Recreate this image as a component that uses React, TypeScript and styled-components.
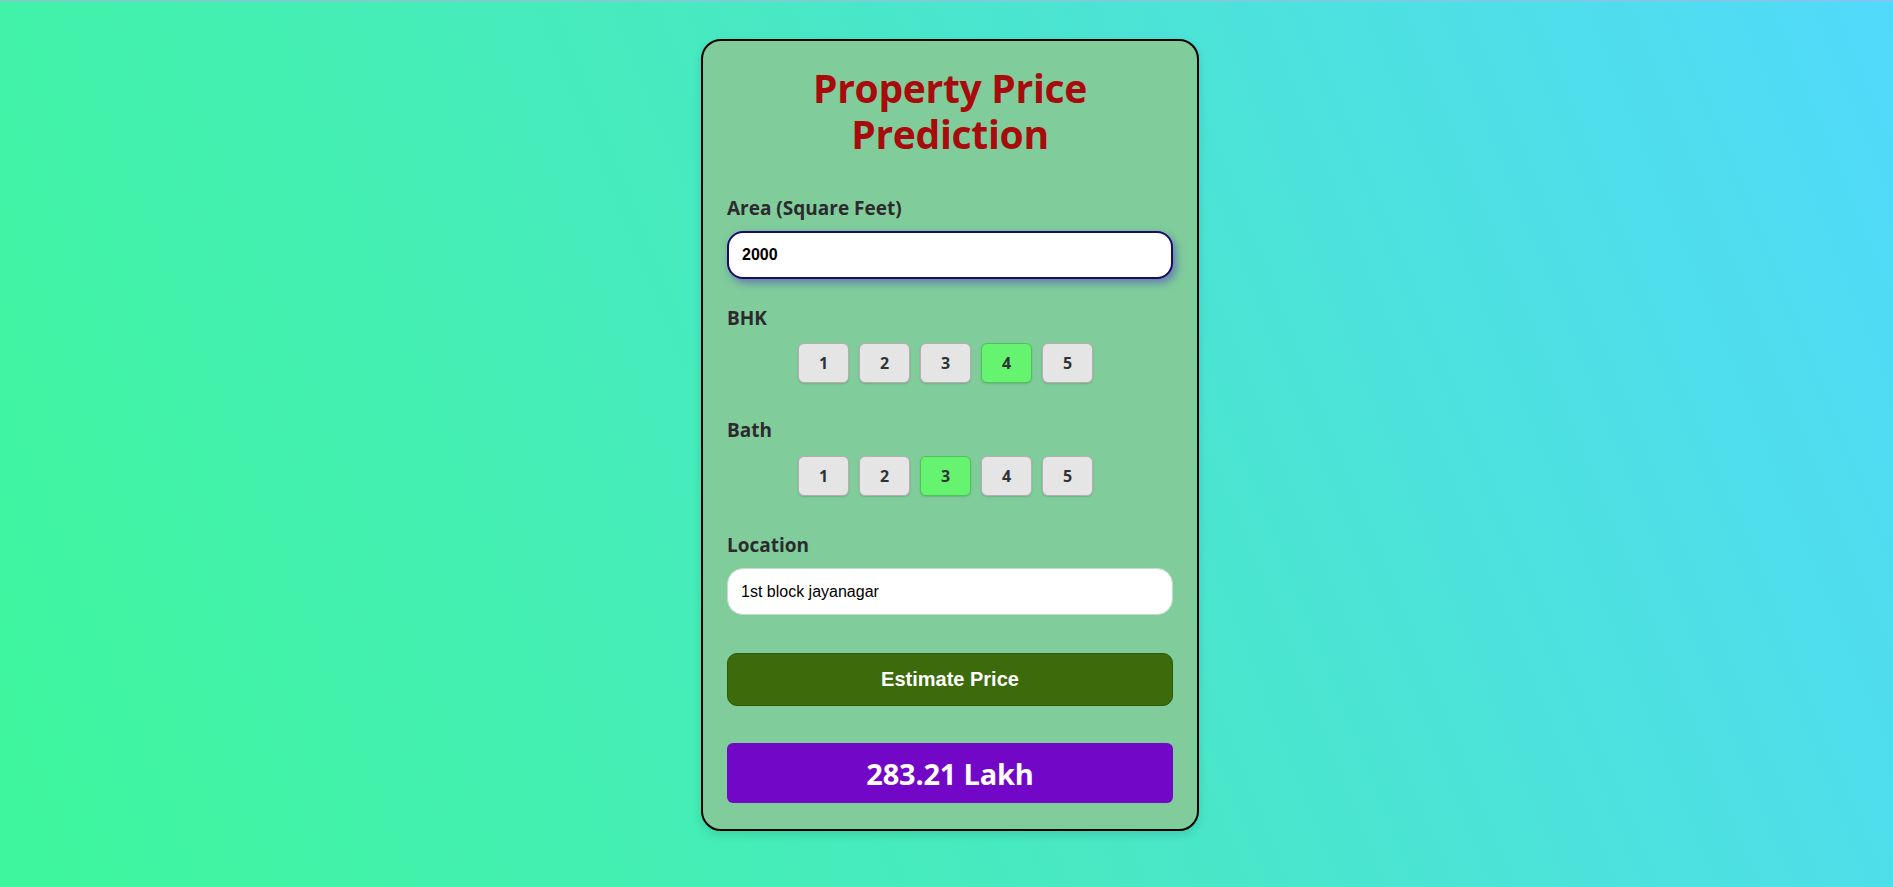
import React, { useState } from "react";
import styled, { createGlobalStyle } from "styled-components";

const Global = createGlobalStyle`
  html, body { margin: 0; padding: 0; }
  body {
    min-height: 887px;
    border-top: 1px solid #a9b4e0;
    box-sizing: border-box;
    background: linear-gradient(68deg, #3ef79c 0%, #48e8c4 50%, #51d9fb 100%);
    background-attachment: fixed;
  }
`;

const Page = styled.main`
  display: flex;
  justify-content: center;
  padding: 38px 0 40px 7px;
  min-height: 886px;
  box-sizing: border-box;
`;

const Card = styled.section`
  width: 498px;
  box-sizing: border-box;
  background: #80cd9b;
  border: 2px solid #000;
  border-radius: 20px;
  padding: 24px 24px 26px;
  box-shadow: 0 4px 10px rgba(0, 0, 0, 0.12);
  font-family: "Open Sans", "Noto Sans", sans-serif;
  align-self: flex-start;
`;

const Title = styled.h1`
  margin: 0 0 40px;
  text-align: center;
  color: #a80b0b;
  font-size: 39px;
  line-height: 46px;
  font-weight: 700;
  letter-spacing: -0.3px;
`;

const Label = styled.label<{ $top: number; $bottom: number }>`
  display: block;
  margin: ${(p) => p.$top}px 0 ${(p) => p.$bottom}px;
  font-size: 19px;
  line-height: 22px;
  font-weight: 700;
  color: #2d2a2e;
`;

const TextInput = styled.input<{ $strong?: boolean }>`
  display: block;
  width: 100%;
  box-sizing: border-box;
  height: ${(p) => (p.$strong ? 48 : 47)}px;
  padding: 0 13px;
  border-radius: 16px;
  font-family: "Liberation Sans", Arial, sans-serif;
  font-size: 16px;
  color: #000;
  background: #fff;
  outline: none;
  font-weight: ${(p) => (p.$strong ? 700 : 400)};
  border: ${(p) => (p.$strong ? "2px solid #1c0a68" : "1px solid #c3dcc8")};
  box-shadow: ${(p) => (p.$strong ? "3px 4px 9px rgba(70, 60, 190, 0.55)" : "none")};
`;

const Choices = styled.div`
  display: flex;
  justify-content: center;
  gap: 10px;
  padding-right: 9px;
`;

const Choice = styled.button<{ $active: boolean }>`
  width: 51px;
  height: 40px;
  box-sizing: border-box;
  border-radius: 6px;
  border: 1px solid ${(p) => (p.$active ? "#4fc259" : "#b9aab4")};
  background: ${(p) => (p.$active ? "#66f470" : "#e5e5e5")};
  box-shadow: 0 1px 2px rgba(0, 0, 0, 0.15);
  font-family: "Open Sans", "Noto Sans", sans-serif;
  font-size: 16px;
  font-weight: 700;
  color: #2f3335;
  cursor: pointer;
  padding: 0;
`;

const EstimateButton = styled.button`
  display: block;
  width: 100%;
  height: 53px;
  margin-top: 38px;
  border-radius: 10px;
  border: 1px solid #2f5708;
  background: #3d6b0b;
  color: #fff;
  font-family: "Liberation Sans", Arial, sans-serif;
  font-size: 20px;
  font-weight: 700;
  cursor: pointer;
`;

const Result = styled.div`
  margin-top: 37px;
  height: 60px;
  border-radius: 6px;
  background: #7307c7;
  color: #fff;
  display: flex;
  align-items: center;
  justify-content: center;
  font-size: 29px;
  font-weight: 700;
  letter-spacing: -0.2px;
`;

const OPTIONS = [1, 2, 3, 4, 5];

export default function App() {
  const [area, setArea] = useState("2000");
  const [bhk, setBhk] = useState(4);
  const [bath, setBath] = useState(3);
  const [loc, setLoc] = useState("1st block jayanagar");

  return (
    <>
      <Global />
      <Page>
        <Card>
          <Title>
            Property Price
            <br />
            Prediction
          </Title>
          <Label $top={1} $bottom={12}>Area (Square Feet)</Label>
          <TextInput $strong value={area} onChange={(e) => setArea(e.target.value)} />
          <Label $top={28} $bottom={14}>BHK</Label>
          <Choices>
            {OPTIONS.map((n) => (
              <Choice key={n} $active={n === bhk} onClick={() => setBhk(n)}>
                {n}
              </Choice>
            ))}
          </Choices>
          <Label $top={36} $bottom={15}>Bath</Label>
          <Choices>
            {OPTIONS.map((n) => (
              <Choice key={n} $active={n === bath} onClick={() => setBath(n)}>
                {n}
              </Choice>
            ))}
          </Choices>
          <Label $top={38} $bottom={12}>Location</Label>
          <TextInput value={loc} onChange={(e) => setLoc(e.target.value)} />
          <EstimateButton>Estimate Price</EstimateButton>
          <Result>283.21 Lakh</Result>
        </Card>
      </Page>
    </>
  );
}
